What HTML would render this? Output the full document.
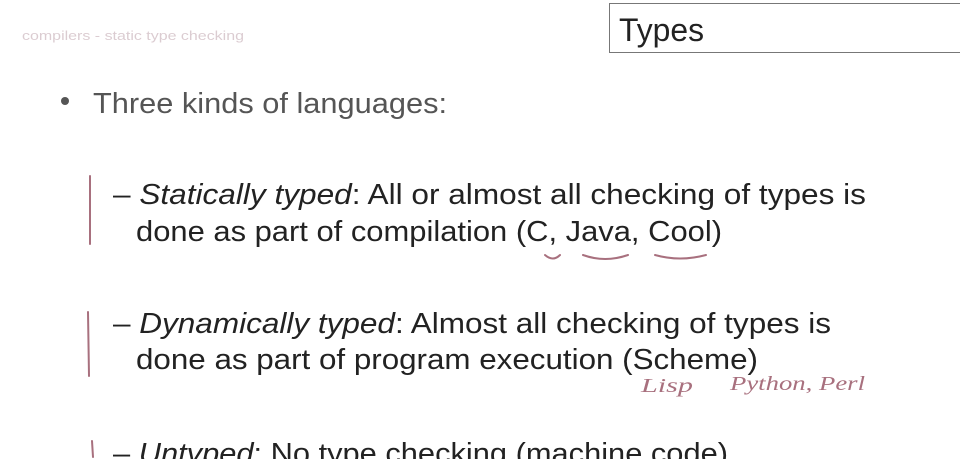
<!DOCTYPE html><html><head><style>body{margin:0;background:#fff;width:960px;height:459px;overflow:hidden}</style></head><body>
<svg width="960" height="459" xmlns="http://www.w3.org/2000/svg" font-family="Liberation Sans, sans-serif">
<rect x="609.5" y="3.5" width="360" height="49" fill="none" stroke="#777" stroke-width="1"/>
<text x="619" y="41" font-size="32" fill="#222" textLength="85" lengthAdjust="spacingAndGlyphs">Types</text>
<text x="22" y="40" font-size="13" fill="#b89aa4" opacity="0.5" textLength="222" lengthAdjust="spacingAndGlyphs">compilers - static type checking</text>
<circle cx="65" cy="101" r="4" fill="#555"/>
<g fill="#555" font-size="29">
<text x="93" y="113" textLength="354" lengthAdjust="spacingAndGlyphs">Three kinds of languages:</text>
</g>
<g fill="#222" font-size="29">
<text x="113" y="204" textLength="753" lengthAdjust="spacingAndGlyphs">– <tspan font-style="italic">Statically typed</tspan>: All or almost all checking of types is</text>
<text x="136" y="241" textLength="586" lengthAdjust="spacingAndGlyphs">done as part of compilation (C, Java, Cool)</text>
<text x="113" y="333" textLength="718" lengthAdjust="spacingAndGlyphs">– <tspan font-style="italic">Dynamically typed</tspan>: Almost all checking of types is</text>
<text x="136" y="369" textLength="622" lengthAdjust="spacingAndGlyphs">done as part of program execution (Scheme)</text>
<text x="113" y="463" textLength="615" lengthAdjust="spacingAndGlyphs">– <tspan font-style="italic">Untyped</tspan>: No type checking (machine code)</text>
</g>
<g stroke="#a8707e" stroke-width="2" fill="none" stroke-linecap="round">
<path d="M90 176 L90 244"/><path d="M88 312 L89 376"/><path d="M92 441 L93 457"/>
<path d="M545 255 Q553 262 560 255"/><path d="M583 255 Q605 263 628 255"/><path d="M655 255 Q680 262 706 255"/>
</g>
<g fill="#a8707e" font-size="20" font-style="italic" font-family="Liberation Serif, serif">
<text x="641" y="392" textLength="52" lengthAdjust="spacingAndGlyphs">Lisp</text><text x="730" y="390" textLength="135" lengthAdjust="spacingAndGlyphs">Python, Perl</text>
</g>
</svg>
</body></html>
